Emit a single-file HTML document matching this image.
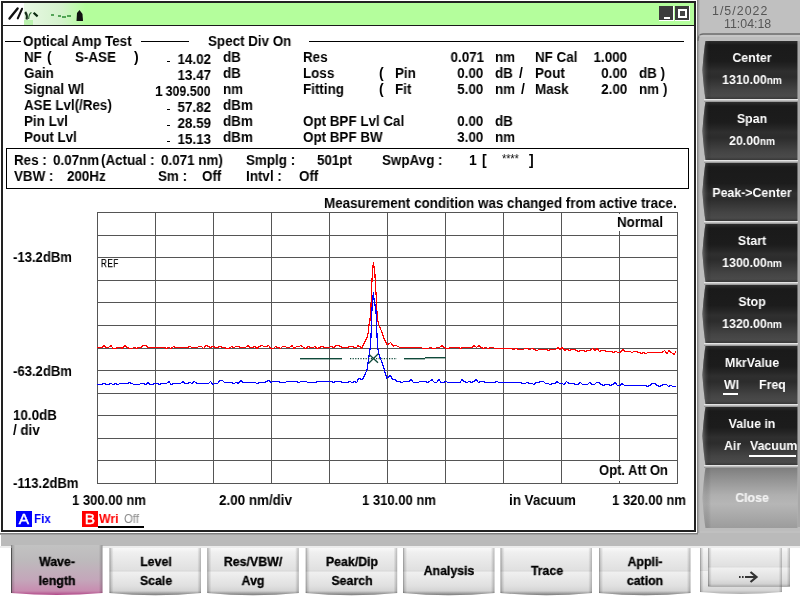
<!DOCTYPE html>
<html><head><meta charset="utf-8"><style>
html,body{margin:0;padding:0;width:800px;height:600px;overflow:hidden;background:#c0c0c0;}
.t{position:absolute;white-space:pre;-webkit-font-smoothing:antialiased;will-change:transform;font-family:"Liberation Sans", sans-serif;}
</style></head><body>
<div style="position:absolute;left:0px;top:0px;width:697px;height:533px;background:#fff;"></div><div style="position:absolute;left:1px;top:1px;width:695px;height:531px;border:2px solid #222;box-sizing:border-box;"></div><div style="position:absolute;left:696px;top:0px;width:1px;height:533px;background:#fff;"></div><div style="position:absolute;left:3px;top:3px;width:691px;height:22px;background:#b4fe9c;"></div><div style="position:absolute;left:3px;top:25px;width:691px;height:1px;background:#1a1a1a;"></div><div style="position:absolute;left:3px;top:3px;width:21px;height:22px;background:#fff;"></div><svg style="position:absolute;left:0;top:0" width="100" height="30"><defs><linearGradient id="lg" x1="0" y1="0" x2="1" y2="0"><stop offset="0" stop-color="#e8f8e4"/><stop offset="0.6" stop-color="#d4f2cc"/><stop offset="1" stop-color="#b4fe9c"/></linearGradient></defs><rect x="24" y="3" width="62" height="22" fill="url(#lg)"/><rect x="24" y="20" width="9" height="5" fill="#a8f098" opacity="0.7"/><path d="M9.5 18.6 L17.6 8.4" stroke="#111" stroke-width="2.4" stroke-linecap="round"/><path d="M17.8 18.4 L22 8.8" stroke="#111" stroke-width="2.1" stroke-linecap="round"/><path d="M25.2 12 Q27.6 15 26.6 19.5" stroke="#16301a" stroke-width="2.1" fill="none"/><path d="M28.6 19 Q29 13.5 31.5 12.5" stroke="#2c6a30" stroke-width="1.1" fill="none"/><path d="M33.6 12.8 L37.6 16.4" stroke="#0c2a12" stroke-width="2.2"/><path d="M51 15 h3 M58 16 h3 M62 17 h4 M67 16 h4" stroke="#2a8a30" stroke-width="1.6"/><path d="M76.5 21 L77 13 L79.5 10 L82.5 14 L83 21 Z" fill="#111"/></svg><div style="position:absolute;left:659px;top:6px;width:15px;height:15px;background:#3c3c3c;border-right:1px solid #fff;border-bottom:1px solid #fff;box-sizing:border-box;"></div><div style="position:absolute;left:664px;top:17px;width:6px;height:2px;background:#fff;"></div><div style="position:absolute;left:675px;top:6px;width:15px;height:15px;background:#3c3c3c;border-right:1px solid #fff;border-bottom:1px solid #fff;box-sizing:border-box;"></div><div style="position:absolute;left:678px;top:9px;width:9px;height:9px;border:2px solid #fff;box-sizing:border-box;background:#444;"></div><div style="position:absolute;left:5px;top:41px;width:16px;height:1px;background:#000;"></div><div style="position:absolute;left:141px;top:41px;width:48px;height:1px;background:#000;"></div><div style="position:absolute;left:309px;top:41px;width:375px;height:1px;background:#000;"></div><div class="t" style="left:23px;transform-origin:0 0;top:34.15px;font-size:14.00px;line-height:14.00px;font-weight:bold;color:#000;transform:scaleX(0.9564);">Optical Amp Test</div><div class="t" style="left:208px;transform-origin:0 0;top:34.15px;font-size:14.00px;line-height:14.00px;font-weight:bold;color:#000;transform:scaleX(0.9564);">Spect Div On</div><div class="t" style="left:24px;transform-origin:0 0;top:50.15px;font-size:14.00px;line-height:14.00px;font-weight:bold;color:#000;transform:scaleX(0.9564);">NF</div><div class="t" style="left:47px;transform-origin:0 0;top:50.15px;font-size:14.00px;line-height:14.00px;font-weight:bold;color:#000;transform:scaleX(0.9564);">(</div><div class="t" style="left:75px;transform-origin:0 0;top:50.15px;font-size:14.00px;line-height:14.00px;font-weight:bold;color:#000;transform:scaleX(0.9564);">S-ASE</div><div class="t" style="left:134px;transform-origin:0 0;top:50.15px;font-size:14.00px;line-height:14.00px;font-weight:bold;color:#000;transform:scaleX(0.9564);">)</div><div class="t" style="left:24px;transform-origin:0 0;top:66.15px;font-size:14.00px;line-height:14.00px;font-weight:bold;color:#000;transform:scaleX(0.9564);">Gain</div><div class="t" style="left:24px;transform-origin:0 0;top:82.15px;font-size:14.00px;line-height:14.00px;font-weight:bold;color:#000;transform:scaleX(0.9564);">Signal Wl</div><div class="t" style="left:24px;transform-origin:0 0;top:98.15px;font-size:14.00px;line-height:14.00px;font-weight:bold;color:#000;transform:scaleX(0.9564);">ASE Lvl(/Res)</div><div class="t" style="left:24px;transform-origin:0 0;top:114.15px;font-size:14.00px;line-height:14.00px;font-weight:bold;color:#000;transform:scaleX(0.9564);">Pin Lvl</div><div class="t" style="left:24px;transform-origin:0 0;top:130.15px;font-size:14.00px;line-height:14.00px;font-weight:bold;color:#000;transform:scaleX(0.9564);">Pout Lvl</div><div class="t" style="left:155px;transform-origin:0 0;top:84.15px;font-size:14.00px;line-height:14.00px;font-weight:bold;color:#000;transform:scaleX(0.9564);">1</div><div class="t" style="right:589px;transform-origin:100% 0;top:52.15px;font-size:14.00px;line-height:14.00px;font-weight:bold;color:#000;transform:scaleX(0.9564);">14.02</div><div class="t" style="right:589px;transform-origin:100% 0;top:68.15px;font-size:14.00px;line-height:14.00px;font-weight:bold;color:#000;transform:scaleX(0.9564);">13.47</div><div class="t" style="right:589px;transform-origin:100% 0;top:84.15px;font-size:14.00px;line-height:14.00px;font-weight:bold;color:#000;transform:scaleX(0.8900);">309.500</div><div class="t" style="right:589px;transform-origin:100% 0;top:100.15px;font-size:14.00px;line-height:14.00px;font-weight:bold;color:#000;transform:scaleX(0.9564);">57.82</div><div class="t" style="right:589px;transform-origin:100% 0;top:116.15px;font-size:14.00px;line-height:14.00px;font-weight:bold;color:#000;transform:scaleX(0.9564);">28.59</div><div class="t" style="right:589px;transform-origin:100% 0;top:132.15px;font-size:14.00px;line-height:14.00px;font-weight:bold;color:#000;transform:scaleX(0.9564);">15.13</div><div style="position:absolute;left:167px;top:61px;width:3px;height:1.2px;background:#000;"></div><div style="position:absolute;left:167px;top:109px;width:3px;height:1.2px;background:#000;"></div><div style="position:absolute;left:167px;top:125px;width:3px;height:1.2px;background:#000;"></div><div style="position:absolute;left:167px;top:141px;width:3px;height:1.2px;background:#000;"></div><div class="t" style="left:223px;transform-origin:0 0;top:50.15px;font-size:14.00px;line-height:14.00px;font-weight:bold;color:#000;transform:scaleX(0.9564);">dB</div><div class="t" style="left:223px;transform-origin:0 0;top:66.15px;font-size:14.00px;line-height:14.00px;font-weight:bold;color:#000;transform:scaleX(0.9564);">dB</div><div class="t" style="left:223px;transform-origin:0 0;top:82.15px;font-size:14.00px;line-height:14.00px;font-weight:bold;color:#000;transform:scaleX(0.9564);">nm</div><div class="t" style="left:223px;transform-origin:0 0;top:98.15px;font-size:14.00px;line-height:14.00px;font-weight:bold;color:#000;transform:scaleX(0.9564);">dBm</div><div class="t" style="left:223px;transform-origin:0 0;top:114.15px;font-size:14.00px;line-height:14.00px;font-weight:bold;color:#000;transform:scaleX(0.9564);">dBm</div><div class="t" style="left:223px;transform-origin:0 0;top:130.15px;font-size:14.00px;line-height:14.00px;font-weight:bold;color:#000;transform:scaleX(0.9564);">dBm</div><div class="t" style="left:303px;transform-origin:0 0;top:50.15px;font-size:14.00px;line-height:14.00px;font-weight:bold;color:#000;transform:scaleX(0.9564);">Res</div><div class="t" style="left:303px;transform-origin:0 0;top:66.15px;font-size:14.00px;line-height:14.00px;font-weight:bold;color:#000;transform:scaleX(0.9564);">Loss</div><div class="t" style="left:303px;transform-origin:0 0;top:82.15px;font-size:14.00px;line-height:14.00px;font-weight:bold;color:#000;transform:scaleX(0.9564);">Fitting</div><div class="t" style="left:303px;transform-origin:0 0;top:114.15px;font-size:14.00px;line-height:14.00px;font-weight:bold;color:#000;transform:scaleX(0.9564);">Opt BPF Lvl Cal</div><div class="t" style="left:303px;transform-origin:0 0;top:130.15px;font-size:14.00px;line-height:14.00px;font-weight:bold;color:#000;transform:scaleX(0.9564);">Opt BPF BW</div><div class="t" style="left:379px;transform-origin:0 0;top:66.15px;font-size:14.00px;line-height:14.00px;font-weight:bold;color:#000;transform:scaleX(0.9564);">(</div><div class="t" style="left:379px;transform-origin:0 0;top:82.15px;font-size:14.00px;line-height:14.00px;font-weight:bold;color:#000;transform:scaleX(0.9564);">(</div><div class="t" style="left:395px;transform-origin:0 0;top:66.15px;font-size:14.00px;line-height:14.00px;font-weight:bold;color:#000;transform:scaleX(0.9564);">Pin</div><div class="t" style="left:395px;transform-origin:0 0;top:82.15px;font-size:14.00px;line-height:14.00px;font-weight:bold;color:#000;transform:scaleX(0.9564);">Fit</div><div class="t" style="right:316px;transform-origin:100% 0;top:50.15px;font-size:14.00px;line-height:14.00px;font-weight:bold;color:#000;transform:scaleX(0.9564);">0.071</div><div class="t" style="right:317px;transform-origin:100% 0;top:66.15px;font-size:14.00px;line-height:14.00px;font-weight:bold;color:#000;transform:scaleX(0.9564);">0.00</div><div class="t" style="right:317px;transform-origin:100% 0;top:82.15px;font-size:14.00px;line-height:14.00px;font-weight:bold;color:#000;transform:scaleX(0.9564);">5.00</div><div class="t" style="right:317px;transform-origin:100% 0;top:114.15px;font-size:14.00px;line-height:14.00px;font-weight:bold;color:#000;transform:scaleX(0.9564);">0.00</div><div class="t" style="right:317px;transform-origin:100% 0;top:130.15px;font-size:14.00px;line-height:14.00px;font-weight:bold;color:#000;transform:scaleX(0.9564);">3.00</div><div class="t" style="left:495px;transform-origin:0 0;top:50.15px;font-size:14.00px;line-height:14.00px;font-weight:bold;color:#000;transform:scaleX(0.9564);">nm</div><div class="t" style="left:495px;transform-origin:0 0;top:66.15px;font-size:14.00px;line-height:14.00px;font-weight:bold;color:#000;transform:scaleX(0.9564);">dB</div><div class="t" style="left:495px;transform-origin:0 0;top:82.15px;font-size:14.00px;line-height:14.00px;font-weight:bold;color:#000;transform:scaleX(0.9564);">nm</div><div class="t" style="left:495px;transform-origin:0 0;top:114.15px;font-size:14.00px;line-height:14.00px;font-weight:bold;color:#000;transform:scaleX(0.9564);">dB</div><div class="t" style="left:495px;transform-origin:0 0;top:130.15px;font-size:14.00px;line-height:14.00px;font-weight:bold;color:#000;transform:scaleX(0.9564);">nm</div><div class="t" style="left:519px;transform-origin:0 0;top:66.15px;font-size:14.00px;line-height:14.00px;font-weight:bold;color:#000;transform:scaleX(0.9564);">/</div><div class="t" style="left:521px;transform-origin:0 0;top:82.15px;font-size:14.00px;line-height:14.00px;font-weight:bold;color:#000;transform:scaleX(0.9564);">/</div><div class="t" style="left:535px;transform-origin:0 0;top:50.15px;font-size:14.00px;line-height:14.00px;font-weight:bold;color:#000;transform:scaleX(0.9564);">NF Cal</div><div class="t" style="left:535px;transform-origin:0 0;top:66.15px;font-size:14.00px;line-height:14.00px;font-weight:bold;color:#000;transform:scaleX(0.9564);">Pout</div><div class="t" style="left:535px;transform-origin:0 0;top:82.15px;font-size:14.00px;line-height:14.00px;font-weight:bold;color:#000;transform:scaleX(0.9564);">Mask</div><div class="t" style="right:173px;transform-origin:100% 0;top:50.15px;font-size:14.00px;line-height:14.00px;font-weight:bold;color:#000;transform:scaleX(0.9564);">1.000</div><div class="t" style="right:173px;transform-origin:100% 0;top:66.15px;font-size:14.00px;line-height:14.00px;font-weight:bold;color:#000;transform:scaleX(0.9564);">0.00</div><div class="t" style="right:173px;transform-origin:100% 0;top:82.15px;font-size:14.00px;line-height:14.00px;font-weight:bold;color:#000;transform:scaleX(0.9564);">2.00</div><div class="t" style="left:639px;transform-origin:0 0;top:66.15px;font-size:14.00px;line-height:14.00px;font-weight:bold;color:#000;transform:scaleX(0.9564);">dB )</div><div class="t" style="left:639px;transform-origin:0 0;top:82.15px;font-size:14.00px;line-height:14.00px;font-weight:bold;color:#000;transform:scaleX(0.9564);">nm )</div><div style="position:absolute;left:6px;top:148px;width:683px;height:41px;border:1px solid #000;box-sizing:border-box;"></div><div class="t" style="left:14px;transform-origin:0 0;top:153.15px;font-size:14.00px;line-height:14.00px;font-weight:bold;color:#000;transform:scaleX(0.9564);">Res :</div><div class="t" style="left:53px;transform-origin:0 0;top:153.15px;font-size:14.00px;line-height:14.00px;font-weight:bold;color:#000;transform:scaleX(0.9564);">0.07nm</div><div class="t" style="left:101px;transform-origin:0 0;top:153.15px;font-size:14.00px;line-height:14.00px;font-weight:bold;color:#000;transform:scaleX(0.9564);">(Actual :</div><div class="t" style="left:161px;transform-origin:0 0;top:153.15px;font-size:14.00px;line-height:14.00px;font-weight:bold;color:#000;transform:scaleX(0.9564);">0.071 nm)</div><div class="t" style="left:246px;transform-origin:0 0;top:153.15px;font-size:14.00px;line-height:14.00px;font-weight:bold;color:#000;transform:scaleX(0.9564);">Smplg :</div><div class="t" style="left:317px;transform-origin:0 0;top:153.15px;font-size:14.00px;line-height:14.00px;font-weight:bold;color:#000;transform:scaleX(0.9564);">501pt</div><div class="t" style="left:382px;transform-origin:0 0;top:153.15px;font-size:14.00px;line-height:14.00px;font-weight:bold;color:#000;transform:scaleX(0.9564);">SwpAvg :</div><div class="t" style="left:469px;transform-origin:0 0;top:153.15px;font-size:14.00px;line-height:14.00px;font-weight:bold;color:#000;transform:scaleX(0.9564);">1</div><div class="t" style="left:481.5px;transform-origin:0 0;top:153.15px;font-size:14.00px;line-height:14.00px;font-weight:bold;color:#000;transform:scaleX(0.9564);">[</div><div class="t" style="left:502px;transform-origin:0 0;top:152.84px;font-size:12.00px;line-height:12.00px;font-weight:normal;color:#000;transform:scaleX(0.9000);">****</div><div class="t" style="left:529px;transform-origin:0 0;top:153.15px;font-size:14.00px;line-height:14.00px;font-weight:bold;color:#000;transform:scaleX(0.9564);">]</div><div class="t" style="left:14px;transform-origin:0 0;top:169.15px;font-size:14.00px;line-height:14.00px;font-weight:bold;color:#000;transform:scaleX(0.9564);">VBW :</div><div class="t" style="left:67px;transform-origin:0 0;top:169.15px;font-size:14.00px;line-height:14.00px;font-weight:bold;color:#000;transform:scaleX(0.9564);">200Hz</div><div class="t" style="left:158px;transform-origin:0 0;top:169.15px;font-size:14.00px;line-height:14.00px;font-weight:bold;color:#000;transform:scaleX(0.9564);">Sm :</div><div class="t" style="left:202px;transform-origin:0 0;top:169.15px;font-size:14.00px;line-height:14.00px;font-weight:bold;color:#000;transform:scaleX(0.9564);">Off</div><div class="t" style="left:246px;transform-origin:0 0;top:169.15px;font-size:14.00px;line-height:14.00px;font-weight:bold;color:#000;transform:scaleX(0.9564);">Intvl :</div><div class="t" style="left:299px;transform-origin:0 0;top:169.15px;font-size:14.00px;line-height:14.00px;font-weight:bold;color:#000;transform:scaleX(0.9564);">Off</div><div class="t" style="left:324px;transform-origin:0 0;top:196.15px;font-size:14.00px;line-height:14.00px;font-weight:bold;color:#000;transform:scaleX(0.9564);">Measurement condition was changed from active trace.</div><svg style="position:absolute;left:0;top:0" width="800" height="600"><rect x="97" y="212" width="1" height="272" fill="#555"/><rect x="155" y="212" width="1" height="272" fill="#555"/><rect x="213" y="212" width="1" height="272" fill="#555"/><rect x="271" y="212" width="1" height="272" fill="#555"/><rect x="329" y="212" width="1" height="272" fill="#555"/><rect x="387" y="212" width="1" height="272" fill="#555"/><rect x="445" y="212" width="1" height="272" fill="#555"/><rect x="503" y="212" width="1" height="272" fill="#555"/><rect x="561" y="212" width="1" height="272" fill="#555"/><rect x="619" y="212" width="1" height="272" fill="#555"/><rect x="677" y="212" width="1" height="272" fill="#555"/><rect x="97" y="212" width="581" height="1" fill="#555"/><rect x="97" y="235" width="581" height="1" fill="#555"/><rect x="97" y="257" width="581" height="1" fill="#555"/><rect x="97" y="280" width="581" height="1" fill="#555"/><rect x="97" y="302" width="581" height="1" fill="#555"/><rect x="97" y="325" width="581" height="1" fill="#555"/><rect x="97" y="348" width="581" height="1" fill="#555"/><rect x="97" y="370" width="581" height="1" fill="#555"/><rect x="97" y="393" width="581" height="1" fill="#555"/><rect x="97" y="415" width="581" height="1" fill="#555"/><rect x="97" y="438" width="581" height="1" fill="#555"/><rect x="97" y="460" width="581" height="1" fill="#555"/><rect x="97" y="483" width="581" height="1" fill="#555"/><polyline points="97.0,347.5 99.3,347.5 101.6,347.5 104.0,345.5 106.3,347.5 108.6,347.5 110.9,345.5 113.2,348.5 115.6,348.5 117.9,347.5 120.2,347.5 122.5,348.5 124.8,345.5 127.2,347.5 129.5,348.5 131.8,348.5 134.1,347.5 136.4,348.5 138.8,347.5 141.1,347.5 143.4,345.5 145.7,345.5 148.0,347.5 150.4,347.5 152.7,347.5 155.0,347.5 157.3,347.5 159.6,347.5 162.0,347.5 164.3,347.5 166.6,348.5 168.9,347.5 171.2,348.5 173.6,346.5 175.9,347.5 178.2,347.5 180.5,347.5 182.8,347.5 185.2,347.5 187.5,347.5 189.8,346.5 192.1,347.5 194.4,347.5 196.8,347.5 199.1,346.5 201.4,346.5 203.7,348.5 206.0,345.5 208.4,346.5 210.7,347.5 213.0,346.5 215.3,347.5 217.6,347.5 220.0,346.5 222.3,347.5 224.6,347.5 226.9,348.5 229.2,348.5 231.6,346.5 233.9,347.5 236.2,346.5 238.5,346.5 240.8,347.5 243.2,347.5 245.5,347.5 247.8,345.5 250.1,347.5 252.4,347.5 254.8,346.5 257.1,348.5 259.4,346.5 261.7,345.5 264.0,346.5 266.4,346.5 268.7,345.5 271.0,348.5 273.3,348.5 275.6,346.5 278.0,347.5 280.3,348.5 282.6,346.5 284.9,346.5 287.2,347.5 289.6,347.5 291.9,345.5 294.2,348.5 296.5,346.5 298.8,346.5 301.2,345.5 303.5,347.5 305.8,348.5 308.1,346.5 310.4,347.5 312.8,347.5 315.1,346.5 317.4,348.5 319.7,347.5 322.0,346.5 324.4,347.5 326.7,347.5 329.0,347.5 331.3,346.5 333.6,347.5 336.0,345.5 338.3,345.5 340.6,346.5 342.9,347.5 345.2,347.5 347.6,347.5 349.9,346.5 352.2,346.5 354.5,347.5 356.8,347.5 358.0,345.5 361.7,348.0 364.6,342.5 367.5,336.7 368.5,330.0 369.0,325.0 370.0,320.0 371.0,307.0 371.5,290.0 372.5,271.0 373.5,262.0 374.0,267.0 374.5,270.0 375.0,275.0 375.5,287.0 376.5,300.0 377.0,314.0 378.0,322.0 379.0,325.0 381.0,330.0 384.0,338.3 387.0,345.0 390.7,342.5 393.3,346.0 395.8,345.4 400.0,347.5 402.3,347.5 404.6,347.5 407.0,347.5 409.3,347.5 411.6,347.5 413.9,347.5 416.2,347.5 418.6,347.5 420.9,347.5 423.2,348.5 425.5,348.5 427.8,348.5 430.2,347.5 432.5,348.5 434.8,348.5 437.1,347.5 439.4,347.5 441.8,345.5 444.1,347.5 446.4,348.5 448.7,348.5 451.0,347.5 453.4,347.5 455.7,347.5 458.0,347.5 460.3,348.5 462.6,347.5 465.0,347.5 467.3,347.5 469.6,347.5 471.9,347.5 474.2,345.5 476.6,347.5 478.9,345.5 481.2,347.5 483.5,348.5 485.8,347.5 488.2,348.5 490.5,347.5 492.8,347.5 495.1,348.5 497.4,348.5 499.8,348.5 502.1,348.5 504.4,348.5 506.7,348.5 509.0,348.5 511.4,348.5 513.7,349.5 516.0,348.5 518.3,349.5 520.6,349.5 523.0,349.5 525.3,348.5 527.6,348.5 529.9,349.5 532.2,348.5 534.6,349.5 536.9,350.5 539.2,349.5 541.5,349.5 543.8,349.5 546.2,349.5 548.5,350.5 550.8,349.5 553.1,349.5 555.4,349.5 557.8,347.5 560.1,349.5 562.4,347.5 564.7,350.5 567.0,349.5 569.4,350.5 571.7,349.5 574.0,349.5 576.3,350.5 578.6,351.5 581.0,350.5 583.3,350.5 585.6,351.5 587.9,350.5 590.2,350.5 592.6,348.5 594.9,350.5 597.2,348.5 599.5,351.5 601.8,350.5 604.2,350.5 606.5,351.5 608.8,351.5 611.1,351.5 613.4,352.5 615.8,351.5 618.1,352.5 620.4,352.5 622.7,349.5 625.0,351.5 627.4,351.5 629.7,351.5 632.0,352.5 634.3,351.5 636.6,351.5 639.0,352.5 641.3,353.5 643.6,352.5 645.9,353.5 648.2,352.5 650.6,352.5 652.9,352.5 655.2,352.5 657.5,352.5 659.8,352.5 662.2,352.5 664.5,350.5 666.8,353.5 669.1,350.5 671.4,352.5 673.8,354.5 676.1,351.5" fill="none" stroke="#ff0000" stroke-width="1.2" shape-rendering="crispEdges"/><polyline points="97.0,384.5 99.3,384.5 101.6,384.5 104.0,383.5 106.3,384.5 108.6,384.5 110.9,383.5 113.2,384.5 115.6,383.5 117.9,384.5 120.2,383.5 122.5,383.5 124.8,383.5 127.2,383.5 129.5,382.5 131.8,383.5 134.1,384.5 136.4,384.5 138.8,384.5 141.1,383.5 143.4,383.5 145.7,384.5 148.0,382.5 150.4,384.5 152.7,384.5 155.0,383.5 157.3,383.5 159.6,384.5 162.0,383.5 164.3,383.5 166.6,383.5 168.9,381.5 171.2,384.5 173.6,383.5 175.9,383.5 178.2,383.5 180.5,383.5 182.8,381.5 185.2,383.5 187.5,383.5 189.8,382.5 192.1,383.5 194.4,381.5 196.8,383.5 199.1,383.5 201.4,383.5 203.7,383.5 206.0,383.5 208.4,383.5 210.7,381.5 213.0,384.5 215.3,383.5 217.6,383.5 220.0,380.5 222.3,380.5 224.6,382.5 226.9,382.5 229.2,382.5 231.6,382.5 233.9,383.5 236.2,382.5 238.5,383.5 240.8,380.5 243.2,382.5 245.5,382.5 247.8,382.5 250.1,382.5 252.4,382.5 254.8,382.5 257.1,383.5 259.4,382.5 261.7,382.5 264.0,382.5 266.4,381.5 268.7,380.5 271.0,382.5 273.3,381.5 275.6,381.5 278.0,381.5 280.3,382.5 282.6,382.5 284.9,382.5 287.2,381.5 289.6,381.5 291.9,381.5 294.2,381.5 296.5,381.5 298.8,382.5 301.2,381.5 303.5,381.5 305.8,381.5 308.1,382.5 310.4,382.5 312.8,382.5 315.1,382.5 317.4,381.5 319.7,381.5 322.0,381.5 324.4,381.5 326.7,381.5 329.0,381.5 331.3,381.5 333.6,382.5 336.0,381.5 338.3,381.5 340.6,381.5 342.9,382.5 345.2,382.5 347.6,382.5 349.9,381.5 352.2,382.5 354.5,381.5 356.8,382.5 358.3,378.3 362.5,379.6 367.0,370.0 368.0,363.0 369.0,356.0 370.0,349.0 371.0,337.0 371.5,318.0 372.5,301.0 373.5,292.0 374.0,299.0 375.0,305.0 376.0,311.0 376.5,323.0 377.0,335.0 377.5,347.0 378.8,354.0 383.3,366.0 386.7,378.3 390.4,375.4 392.5,379.2 394.8,379.5 397.1,381.5 399.5,381.5 401.8,382.5 404.1,381.5 406.4,381.5 408.7,381.5 411.1,379.5 413.4,382.5 415.7,382.5 418.0,382.5 420.3,381.5 422.7,381.5 425.0,381.5 427.3,382.5 429.6,381.5 431.9,379.5 434.3,382.5 436.6,382.5 438.9,379.5 441.2,382.5 443.5,382.5 445.9,381.5 448.2,382.5 450.5,382.5 452.8,382.5 455.1,382.5 457.5,382.5 459.8,382.5 462.1,379.5 464.4,381.5 466.7,382.5 469.1,381.5 471.4,382.5 473.7,381.5 476.0,379.5 478.3,382.5 480.7,381.5 483.0,381.5 485.3,382.5 487.6,382.5 489.9,382.5 492.3,382.5 494.6,382.5 496.9,381.5 499.2,382.5 501.5,382.5 503.9,382.5 506.2,382.5 508.5,382.5 510.8,382.5 513.1,382.5 515.5,382.5 517.8,382.5 520.1,382.5 522.4,383.5 524.7,383.5 527.1,382.5 529.4,383.5 531.7,383.5 534.0,384.5 536.3,382.5 538.7,382.5 541.0,381.5 543.3,381.5 545.6,383.5 547.9,383.5 550.3,384.5 552.6,383.5 554.9,383.5 557.2,381.5 559.5,383.5 561.9,383.5 564.2,384.5 566.5,381.5 568.8,383.5 571.1,383.5 573.5,383.5 575.8,384.5 578.1,384.5 580.4,382.5 582.7,384.5 585.1,384.5 587.4,384.5 589.7,382.5 592.0,384.5 594.3,384.5 596.7,382.5 599.0,382.5 601.3,384.5 603.6,385.5 605.9,384.5 608.3,384.5 610.6,385.5 612.9,384.5 615.2,382.5 617.5,385.5 619.9,385.5 622.2,383.5 624.5,385.5 626.8,385.5 629.1,385.5 631.5,385.5 633.8,385.5 636.1,385.5 638.4,385.5 640.7,385.5 643.1,385.5 645.4,385.5 647.7,386.5 650.0,385.5 652.3,383.5 654.7,383.5 657.0,385.5 659.3,386.5 661.6,385.5 663.9,384.5 666.3,384.5 668.6,386.5 670.9,385.5 673.2,386.5 675.5,386.5" fill="none" stroke="#0000ff" stroke-width="1.2" shape-rendering="crispEdges"/><rect x="300" y="358" width="42" height="1.4" fill="#0f4a3a"/><line x1="350" y1="358.7" x2="397" y2="358.7" stroke="#0f4a3a" stroke-width="1.3" stroke-dasharray="1.2 1.4"/><rect x="404" y="358" width="21" height="1.4" fill="#0f4a3a"/><rect x="425" y="357" width="20.6" height="1.4" fill="#0f4a3a"/><path d="M369.2 354.6 L378 362.7 M368.7 363.3 L378.3 353.7" stroke="#0f4a3a" stroke-width="1.3"/></svg><div class="t" style="left:100.5px;transform-origin:0 0;top:258.74px;font-size:10.00px;line-height:10.00px;font-weight:normal;color:#000;transform:scaleX(0.7800);letter-spacing:1px;-webkit-text-stroke:0.25px #000;">REF</div><div style="position:absolute;left:616px;top:214px;width:48px;height:17px;background:#fff;"></div><div class="t" style="left:617px;transform-origin:0 0;top:215.15px;font-size:14.00px;line-height:14.00px;font-weight:bold;color:#000;transform:scaleX(0.9564);">Normal</div><div style="position:absolute;left:597px;top:462px;width:72px;height:19px;background:#fff;"></div><div class="t" style="left:598.5px;transform-origin:0 0;top:463.15px;font-size:14.00px;line-height:14.00px;font-weight:bold;color:#000;transform:scaleX(0.9300);">Opt. Att On</div><div class="t" style="left:12.8px;transform-origin:0 0;top:250.15px;font-size:14.00px;line-height:14.00px;font-weight:bold;color:#000;transform:scaleX(0.9350);">-13.2dBm</div><div class="t" style="left:12.8px;transform-origin:0 0;top:364.15px;font-size:14.00px;line-height:14.00px;font-weight:bold;color:#000;transform:scaleX(0.9350);">-63.2dBm</div><div class="t" style="left:13px;transform-origin:0 0;top:408.15px;font-size:14.00px;line-height:14.00px;font-weight:bold;color:#000;transform:scaleX(0.9564);">10.0dB</div><div class="t" style="left:13px;transform-origin:0 0;top:423.15px;font-size:14.00px;line-height:14.00px;font-weight:bold;color:#000;transform:scaleX(0.9564);">/ div</div><div class="t" style="left:12.8px;transform-origin:0 0;top:476.15px;font-size:14.00px;line-height:14.00px;font-weight:bold;color:#000;transform:scaleX(0.9350);">-113.2dBm</div><div class="t" style="left:72px;transform-origin:0 0;top:493.15px;font-size:14.00px;line-height:14.00px;font-weight:bold;color:#000;transform:scaleX(0.9300);">1 300.00 nm</div><div class="t" style="left:219px;transform-origin:0 0;top:493.15px;font-size:14.00px;line-height:14.00px;font-weight:bold;color:#000;transform:scaleX(0.9564);">2.00 nm/div</div><div class="t" style="left:362px;transform-origin:0 0;top:493.15px;font-size:14.00px;line-height:14.00px;font-weight:bold;color:#000;transform:scaleX(0.9300);">1 310.00 nm</div><div class="t" style="left:508.5px;transform-origin:0 0;top:493.15px;font-size:14.00px;line-height:14.00px;font-weight:bold;color:#000;transform:scaleX(0.9564);">in Vacuum</div><div class="t" style="left:611.5px;transform-origin:0 0;top:493.15px;font-size:14.00px;line-height:14.00px;font-weight:bold;color:#000;transform:scaleX(0.9300);">1 320.00 nm</div><div style="position:absolute;left:16px;top:511px;width:16px;height:16px;background:#0000ff;"></div><div class="t" style="left:-176px;width:400px;text-align:center;transform-origin:50% 0;top:511.30px;font-size:15.00px;line-height:15.00px;font-weight:normal;color:#fff;transform:scaleX(1.0300);-webkit-text-stroke:0.4px #fff;">A</div><div class="t" style="left:33.5px;transform-origin:0 0;top:512.56px;font-size:12.92px;line-height:12.92px;font-weight:bold;color:#0000ff;transform:scaleX(0.9000);">Fix</div><div style="position:absolute;left:82px;top:511px;width:16px;height:16px;background:#ff0000;"></div><div class="t" style="left:-110px;width:400px;text-align:center;transform-origin:50% 0;top:511.30px;font-size:15.00px;line-height:15.00px;font-weight:normal;color:#fff;transform:scaleX(1.0300);-webkit-text-stroke:0.4px #fff;">B</div><div class="t" style="left:98.5px;transform-origin:0 0;top:512.56px;font-size:12.92px;line-height:12.92px;font-weight:bold;color:#ff0000;transform:scaleX(0.9500);">Wri</div><div class="t" style="left:123.5px;transform-origin:0 0;top:513.34px;font-size:12.00px;line-height:12.00px;font-weight:normal;color:#8a8a8a;transform:scaleX(0.9500);">Off</div><div style="position:absolute;left:98px;top:526px;width:46px;height:2px;background:#000;"></div><div style="position:absolute;left:697px;top:0px;width:103px;height:533px;background:#c0c0c0;"></div><div style="position:absolute;left:697px;top:0px;width:3px;height:533px;background:linear-gradient(90deg,#7a7a7a,#a8a8a8 60%,#bcbcbc);"></div><div class="t" style="left:712px;transform-origin:0 0;top:4.84px;font-size:12.00px;line-height:12.00px;font-weight:normal;color:#555;transform:scaleX(1.0300);letter-spacing:1px;">1/5/2022</div><div class="t" style="left:724px;transform-origin:0 0;top:17.84px;font-size:12.00px;line-height:12.00px;font-weight:normal;color:#555;transform:scaleX(1.0300);letter-spacing:0px;">11:04:18</div><svg style="position:absolute;left:0;top:0" width="800" height="600"><defs><linearGradient id="gd" x1="0" y1="0" x2="0" y2="1"><stop offset="0" stop-color="#2e2e2e"/><stop offset="0.07" stop-color="#1a1a1a"/><stop offset="0.35" stop-color="#1c1c1c"/><stop offset="0.45" stop-color="#262626"/><stop offset="0.52" stop-color="#2f2f2f"/><stop offset="0.62" stop-color="#2c2c2c"/><stop offset="0.85" stop-color="#444"/><stop offset="0.95" stop-color="#4a4a4a"/><stop offset="1" stop-color="#383838"/></linearGradient><linearGradient id="gc" x1="0" y1="0" x2="0" y2="1"><stop offset="0" stop-color="#7e7e7e"/><stop offset="0.12" stop-color="#8c8c8c"/><stop offset="0.45" stop-color="#afafaf"/><stop offset="0.6" stop-color="#b6b6b6"/><stop offset="1" stop-color="#9c9c9c"/></linearGradient><linearGradient id="gl" x1="0" y1="0" x2="1" y2="0"><stop offset="0" stop-color="#9a9a9a" stop-opacity="0.9"/><stop offset="1" stop-color="#000" stop-opacity="0"/></linearGradient></defs><rect x="700" y="34" width="100" height="497" fill="#bdbdbd"/><path d="M698 41 Q698 34 703 34 L800 34" stroke="#6c6c6c" stroke-width="1.3" fill="none"/><rect x="699" y="35.5" width="101" height="1" fill="#d0d0d0"/><rect x="797.5" y="41" width="2.5" height="486" fill="#a8a8a8"/><path d="M705.5 41 L797.5 41 L797.5 99 L705.5 99 Q704 91 702.4 70.0 Q704 49 705.5 41 Z" fill="url(#gd)"/><path d="M705.5 41 L711 41 L711 99 L705.5 99 Q704 91 702.4 70.0 Q704 49 705.5 41 Z" fill="url(#gl)" opacity="0.6"/><rect x="704" y="99" width="94" height="1.6" fill="#e4e4e4"/><rect x="704" y="100.6" width="94" height="1.4" fill="#9c9c9c"/><path d="M705.5 102 L797.5 102 L797.5 160 L705.5 160 Q704 152 702.4 131.0 Q704 110 705.5 102 Z" fill="url(#gd)"/><path d="M705.5 102 L711 102 L711 160 L705.5 160 Q704 152 702.4 131.0 Q704 110 705.5 102 Z" fill="url(#gl)" opacity="0.6"/><rect x="704" y="160" width="94" height="1.6" fill="#e4e4e4"/><rect x="704" y="161.6" width="94" height="1.4" fill="#9c9c9c"/><path d="M705.5 163 L797.5 163 L797.5 221 L705.5 221 Q704 213 702.4 192.0 Q704 171 705.5 163 Z" fill="url(#gd)"/><path d="M705.5 163 L711 163 L711 221 L705.5 221 Q704 213 702.4 192.0 Q704 171 705.5 163 Z" fill="url(#gl)" opacity="0.6"/><rect x="704" y="221" width="94" height="1.6" fill="#e4e4e4"/><rect x="704" y="222.6" width="94" height="1.4" fill="#9c9c9c"/><path d="M705.5 224 L797.5 224 L797.5 282 L705.5 282 Q704 274 702.4 253.0 Q704 232 705.5 224 Z" fill="url(#gd)"/><path d="M705.5 224 L711 224 L711 282 L705.5 282 Q704 274 702.4 253.0 Q704 232 705.5 224 Z" fill="url(#gl)" opacity="0.6"/><rect x="704" y="282" width="94" height="1.6" fill="#e4e4e4"/><rect x="704" y="283.6" width="94" height="1.4" fill="#9c9c9c"/><path d="M705.5 285 L797.5 285 L797.5 343 L705.5 343 Q704 335 702.4 314.0 Q704 293 705.5 285 Z" fill="url(#gd)"/><path d="M705.5 285 L711 285 L711 343 L705.5 343 Q704 335 702.4 314.0 Q704 293 705.5 285 Z" fill="url(#gl)" opacity="0.6"/><rect x="704" y="343" width="94" height="1.6" fill="#e4e4e4"/><rect x="704" y="344.6" width="94" height="1.4" fill="#9c9c9c"/><path d="M705.5 346 L797.5 346 L797.5 404 L705.5 404 Q704 396 702.4 375.0 Q704 354 705.5 346 Z" fill="url(#gd)"/><path d="M705.5 346 L711 346 L711 404 L705.5 404 Q704 396 702.4 375.0 Q704 354 705.5 346 Z" fill="url(#gl)" opacity="0.6"/><rect x="704" y="404" width="94" height="1.6" fill="#e4e4e4"/><rect x="704" y="405.6" width="94" height="1.4" fill="#9c9c9c"/><path d="M705.5 407 L797.5 407 L797.5 465 L705.5 465 Q704 457 702.4 436.0 Q704 415 705.5 407 Z" fill="url(#gd)"/><path d="M705.5 407 L711 407 L711 465 L705.5 465 Q704 457 702.4 436.0 Q704 415 705.5 407 Z" fill="url(#gl)" opacity="0.6"/><rect x="704" y="465" width="94" height="1.6" fill="#e4e4e4"/><rect x="704" y="466.6" width="94" height="1.4" fill="#9c9c9c"/><path d="M705.5 468 L797.5 468 L797.5 528 L705.5 528 Q704 520 702.4 498.0 Q704 476 705.5 468 Z" fill="url(#gc)"/><path d="M705.5 468 L711 468 L711 528 L705.5 528 Q704 520 702.4 498.0 Q704 476 705.5 468 Z" fill="url(#gl)" opacity="0.35"/></svg><div class="t" style="left:552px;width:400px;text-align:center;transform-origin:50% 0;top:52.06px;font-size:12.92px;line-height:12.92px;font-weight:bold;color:#fff;transform:scaleX(0.9564);">Center</div><div class="t" style="left:552px;width:400px;text-align:center;transform-origin:50% 0;top:73.56px;font-size:12.92px;line-height:12.92px;font-weight:bold;color:#fff;transform:scaleX(0.9564);">1310.00<span style="font-size:10.5px">nm</span></div><div class="t" style="left:552px;width:400px;text-align:center;transform-origin:50% 0;top:113.06px;font-size:12.92px;line-height:12.92px;font-weight:bold;color:#fff;transform:scaleX(0.9564);">Span</div><div class="t" style="left:552px;width:400px;text-align:center;transform-origin:50% 0;top:134.56px;font-size:12.92px;line-height:12.92px;font-weight:bold;color:#fff;transform:scaleX(0.9564);">20.00<span style="font-size:10.5px">nm</span></div><div class="t" style="left:552px;width:400px;text-align:center;transform-origin:50% 0;top:186.56px;font-size:12.92px;line-height:12.92px;font-weight:bold;color:#fff;transform:scaleX(0.9564);">Peak-&gt;Center</div><div class="t" style="left:552px;width:400px;text-align:center;transform-origin:50% 0;top:235.06px;font-size:12.92px;line-height:12.92px;font-weight:bold;color:#fff;transform:scaleX(0.9564);">Start</div><div class="t" style="left:552px;width:400px;text-align:center;transform-origin:50% 0;top:256.56px;font-size:12.92px;line-height:12.92px;font-weight:bold;color:#fff;transform:scaleX(0.9564);">1300.00<span style="font-size:10.5px">nm</span></div><div class="t" style="left:552px;width:400px;text-align:center;transform-origin:50% 0;top:296.06px;font-size:12.92px;line-height:12.92px;font-weight:bold;color:#fff;transform:scaleX(0.9564);">Stop</div><div class="t" style="left:552px;width:400px;text-align:center;transform-origin:50% 0;top:317.56px;font-size:12.92px;line-height:12.92px;font-weight:bold;color:#fff;transform:scaleX(0.9564);">1320.00<span style="font-size:10.5px">nm</span></div><div class="t" style="left:552px;width:400px;text-align:center;transform-origin:50% 0;top:357.06px;font-size:12.92px;line-height:12.92px;font-weight:bold;color:#fff;transform:scaleX(0.9564);">MkrValue</div><div class="t" style="left:724px;transform-origin:0 0;top:378.56px;font-size:12.92px;line-height:12.92px;font-weight:bold;color:#fff;transform:scaleX(0.9564);">Wl</div><div class="t" style="left:759px;transform-origin:0 0;top:378.56px;font-size:12.92px;line-height:12.92px;font-weight:bold;color:#fff;transform:scaleX(0.9564);">Freq</div><div style="position:absolute;left:723px;top:393px;width:15px;height:2px;background:#fff;"></div><div class="t" style="left:552px;width:400px;text-align:center;transform-origin:50% 0;top:418.06px;font-size:12.92px;line-height:12.92px;font-weight:bold;color:#fff;transform:scaleX(0.9564);">Value in</div><div class="t" style="left:724px;transform-origin:0 0;top:439.56px;font-size:12.92px;line-height:12.92px;font-weight:bold;color:#fff;transform:scaleX(0.9564);">Air</div><div class="t" style="left:750px;transform-origin:0 0;top:439.56px;font-size:12.92px;line-height:12.92px;font-weight:bold;color:#fff;transform:scaleX(0.9564);">Vacuum</div><div style="position:absolute;left:749px;top:455px;width:47px;height:2px;background:#fff;"></div><div class="t" style="left:552px;width:400px;text-align:center;transform-origin:50% 0;top:491.56px;font-size:12.92px;line-height:12.92px;font-weight:bold;color:#f2f2f2;transform:scaleX(0.9564);-webkit-text-stroke:0.2px #f2f2f2;">Close</div><div style="position:absolute;left:0px;top:533px;width:800px;height:67px;background:#fff;"></div><div style="position:absolute;left:1px;top:533px;width:799px;height:13px;background:#bababa;"></div><div style="position:absolute;left:0px;top:533px;width:698px;height:2px;background:linear-gradient(180deg,#707070,#b0b0b0);"></div><div style="position:absolute;left:0px;top:546px;width:800px;height:1.5px;background:#ececec;"></div><svg style="position:absolute;left:0;top:0" width="800" height="600"><defs><linearGradient id="bg1" x1="0" y1="0" x2="0" y2="1"><stop offset="0" stop-color="#f8f8f8"/><stop offset="0.1" stop-color="#efefef"/><stop offset="0.47" stop-color="#e0e0e0"/><stop offset="0.485" stop-color="#d6d6d6"/><stop offset="0.51" stop-color="#f0f0f0"/><stop offset="0.8" stop-color="#e0e0e0"/><stop offset="0.92" stop-color="#d2d2d2"/><stop offset="1" stop-color="#a4a4a4"/></linearGradient><linearGradient id="bg0" x1="0" y1="0" x2="0" y2="1"><stop offset="0" stop-color="#c2c2c2"/><stop offset="0.3" stop-color="#bdbabc"/><stop offset="0.7" stop-color="#c4a6ba"/><stop offset="0.92" stop-color="#c88cb0"/><stop offset="1" stop-color="#b04888"/></linearGradient><linearGradient id="bsh" x1="0" y1="0" x2="1" y2="0"><stop offset="0" stop-color="#000" stop-opacity="0.38"/><stop offset="0.015" stop-color="#000" stop-opacity="0.16"/><stop offset="0.045" stop-color="#000" stop-opacity="0"/><stop offset="0.96" stop-color="#000" stop-opacity="0"/><stop offset="1" stop-color="#000" stop-opacity="0.24"/></linearGradient><linearGradient id="bbt" x1="0" y1="0" x2="0" y2="1"><stop offset="0" stop-color="#000" stop-opacity="0"/><stop offset="0.9" stop-color="#000" stop-opacity="0"/><stop offset="1" stop-color="#000" stop-opacity="0.25"/></linearGradient></defs><path d="M11 545 L102.5 545 L102.5 593 Q56.75 597 11 593 Z" fill="url(#bg0)"/><path d="M11 545 L102.5 545 L102.5 593 Q56.75 597 11 593 Z" fill="url(#bsh)"/><rect x="11" y="548" width="1" height="45" fill="#444" opacity="0.8"/><path d="M109.5 548 L201.0 548 L201.0 593 Q155.25 597.5 109.5 593 Z" fill="url(#bg1)"/><path d="M109.5 548 L201.0 548 L201.0 593 Q155.25 597.5 109.5 593 Z" fill="url(#bsh)"/><path d="M109.5 548 L201.0 548 L201.0 593 Q155.25 597.5 109.5 593 Z" fill="url(#bbt)"/><path d="M207.3 548 L298.8 548 L298.8 593 Q253.05 597.5 207.3 593 Z" fill="url(#bg1)"/><path d="M207.3 548 L298.8 548 L298.8 593 Q253.05 597.5 207.3 593 Z" fill="url(#bsh)"/><path d="M207.3 548 L298.8 548 L298.8 593 Q253.05 597.5 207.3 593 Z" fill="url(#bbt)"/><path d="M305.7 548 L397.2 548 L397.2 593 Q351.45 597.5 305.7 593 Z" fill="url(#bg1)"/><path d="M305.7 548 L397.2 548 L397.2 593 Q351.45 597.5 305.7 593 Z" fill="url(#bsh)"/><path d="M305.7 548 L397.2 548 L397.2 593 Q351.45 597.5 305.7 593 Z" fill="url(#bbt)"/><path d="M403 548 L494.5 548 L494.5 593 Q448.75 597.5 403 593 Z" fill="url(#bg1)"/><path d="M403 548 L494.5 548 L494.5 593 Q448.75 597.5 403 593 Z" fill="url(#bsh)"/><path d="M403 548 L494.5 548 L494.5 593 Q448.75 597.5 403 593 Z" fill="url(#bbt)"/><path d="M500.5 548 L592.0 548 L592.0 593 Q546.25 597.5 500.5 593 Z" fill="url(#bg1)"/><path d="M500.5 548 L592.0 548 L592.0 593 Q546.25 597.5 500.5 593 Z" fill="url(#bsh)"/><path d="M500.5 548 L592.0 548 L592.0 593 Q546.25 597.5 500.5 593 Z" fill="url(#bbt)"/><path d="M599 548 L690.5 548 L690.5 593 Q644.75 597.5 599 593 Z" fill="url(#bg1)"/><path d="M599 548 L690.5 548 L690.5 593 Q644.75 597.5 599 593 Z" fill="url(#bsh)"/><path d="M599 548 L690.5 548 L690.5 593 Q644.75 597.5 599 593 Z" fill="url(#bbt)"/><path d="M708 548 L790 548 L790 587 L708 587 Z" fill="url(#bg1)"/><path d="M708 548 L790 548 L790 587 L708 587 Z" fill="url(#bsh)"/><rect x="708" y="586" width="82" height="1" fill="#b0b0b0"/><path d="M700 548 L708 548 L708 587 L782 587 L782 592 Q741 596 700 592 Z" fill="url(#bg1)" opacity="0.9"/><path d="M700 548 L782 548 L782 592 Q741 596 700 592 Z" fill="url(#bsh)"/><path d="M739 577 h1.6 M742 577 h1.6 M745 577 h11" stroke="#333" stroke-width="2"/><path d="M750.5 572 L756.5 577 L750.5 582" stroke="#333" stroke-width="2.2" fill="none"/></svg><div class="t" style="left:-143px;width:400px;text-align:center;transform-origin:50% 0;top:556.06px;font-size:12.92px;line-height:12.92px;font-weight:bold;color:#000;transform:scaleX(0.9564);-webkit-text-stroke:0.3px #000;">Wave-</div><div class="t" style="left:-143px;width:400px;text-align:center;transform-origin:50% 0;top:575.06px;font-size:12.92px;line-height:12.92px;font-weight:bold;color:#000;transform:scaleX(0.9564);-webkit-text-stroke:0.3px #000;">length</div><div class="t" style="left:-44.5px;width:400px;text-align:center;transform-origin:50% 0;top:556.06px;font-size:12.92px;line-height:12.92px;font-weight:bold;color:#000;transform:scaleX(0.9564);-webkit-text-stroke:0.3px #000;">Level</div><div class="t" style="left:-44.5px;width:400px;text-align:center;transform-origin:50% 0;top:575.06px;font-size:12.92px;line-height:12.92px;font-weight:bold;color:#000;transform:scaleX(0.9564);-webkit-text-stroke:0.3px #000;">Scale</div><div class="t" style="left:53.30000000000001px;width:400px;text-align:center;transform-origin:50% 0;top:556.06px;font-size:12.92px;line-height:12.92px;font-weight:bold;color:#000;transform:scaleX(0.9564);-webkit-text-stroke:0.3px #000;">Res/VBW/</div><div class="t" style="left:53.30000000000001px;width:400px;text-align:center;transform-origin:50% 0;top:575.06px;font-size:12.92px;line-height:12.92px;font-weight:bold;color:#000;transform:scaleX(0.9564);-webkit-text-stroke:0.3px #000;">Avg</div><div class="t" style="left:151.7px;width:400px;text-align:center;transform-origin:50% 0;top:556.06px;font-size:12.92px;line-height:12.92px;font-weight:bold;color:#000;transform:scaleX(0.9564);-webkit-text-stroke:0.3px #000;">Peak/Dip</div><div class="t" style="left:151.7px;width:400px;text-align:center;transform-origin:50% 0;top:575.06px;font-size:12.92px;line-height:12.92px;font-weight:bold;color:#000;transform:scaleX(0.9564);-webkit-text-stroke:0.3px #000;">Search</div><div class="t" style="left:249px;width:400px;text-align:center;transform-origin:50% 0;top:565.06px;font-size:12.92px;line-height:12.92px;font-weight:bold;color:#000;transform:scaleX(0.9564);-webkit-text-stroke:0.3px #000;">Analysis</div><div class="t" style="left:346.5px;width:400px;text-align:center;transform-origin:50% 0;top:565.06px;font-size:12.92px;line-height:12.92px;font-weight:bold;color:#000;transform:scaleX(0.9564);-webkit-text-stroke:0.3px #000;">Trace</div><div class="t" style="left:445px;width:400px;text-align:center;transform-origin:50% 0;top:556.06px;font-size:12.92px;line-height:12.92px;font-weight:bold;color:#000;transform:scaleX(0.9564);-webkit-text-stroke:0.3px #000;">Appli-</div><div class="t" style="left:445px;width:400px;text-align:center;transform-origin:50% 0;top:575.06px;font-size:12.92px;line-height:12.92px;font-weight:bold;color:#000;transform:scaleX(0.9564);-webkit-text-stroke:0.3px #000;">cation</div>
</body></html>
